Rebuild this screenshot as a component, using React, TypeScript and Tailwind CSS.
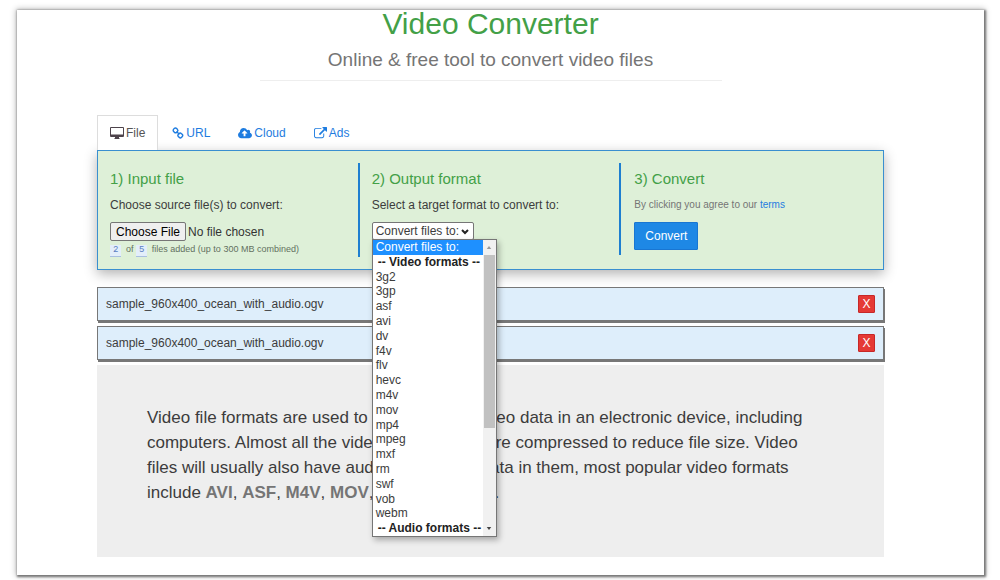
import type { ReactNode } from "react";

const tabs: { label: string; icon: ReactNode }[] = [
  { label: "URL", icon: <LinkIcon /> },
  { label: "Cloud", icon: <CloudIcon /> },
  { label: "Ads", icon: <ExternalIcon /> },
];

const formats = [
  "Convert files to:", "-- Video formats --", "3g2", "3gp", "asf", "avi", "dv", "f4v", "flv", "hevc",
  "m4v", "mov", "mp4", "mpeg", "mxf", "rm", "swf", "vob", "webm", "-- Audio formats --",
];

const files = [
  { id: 1, name: "sample_960x400_ocean_with_audio.ogv" },
  { id: 2, name: "sample_960x400_ocean_with_audio.ogv" },
];

export default function App() {
  return (
    <div className="bg-white pt-[10px] pr-4 pb-[5px] pl-[17px] font-['Liberation_Sans',Arial,sans-serif] text-[#3c3c3c]">
      <main className="bg-white pr-[100px] pb-[18px] pl-20 shadow-[1px_1px_2px_1px_#777,0_0_6px_1px_#bbb]">
        <header className="text-center">
          <h1 className="text-[30px] leading-7 text-[#43a047]">Video Converter</h1>
          <p className="mt-[6px] text-[19px] leading-8 text-[#757575]">Online &amp; free tool to convert video files</p>
          <hr className="mx-auto mt-1 w-[462px] max-w-full border-[#eee]" />
        </header>

        <nav className="mt-[34px] flex text-xs leading-5">
          <a href="#file" className="flex items-center gap-[2px] border border-b-0 border-[#ddd] bg-white px-3 py-[7px] text-[#555]">
            <DesktopIcon />
            File
          </a>
          {tabs.map((tab) => (
            <a key={tab.label} href={`#${tab.label.toLowerCase()}`} className="flex items-center gap-[2px] px-[14px] pt-2 pb-[7px] text-[#1e7ce0]">
              {tab.icon}
              {tab.label}
            </a>
          ))}
        </nav>

        <Steps />

        <ul className="mt-[17px] space-y-[5px]">
          {files.map((file) => (
            <li key={file.id} className="flex h-[34px] items-center justify-between border border-[#777] bg-[#deeefb] pr-2 pl-2 text-xs shadow-[1px_2px_0_#777]">
              {file.name}
              <button type="button" aria-label={`Remove ${file.name}`} className="h-[18px] w-[17px] rounded-[1px] border border-[#c62828] bg-[#e53935] text-xs leading-4 text-white">
                X
              </button>
            </li>
          ))}
        </ul>

        <section className="mt-[5px] bg-[#eee] pt-10 pr-[70px] pb-[52px] pl-[50px]">
          <p className="text-[17px] leading-[25px]">
            Video file formats are used to record digital video data in an electronic device, including computers. Almost all
            the video data formats are compressed to reduce file size. Video files will usually also have audio and picture
            data in them, most popular video formats include <Format name="AVI" />, <Format name="ASF" />, <Format name="M4V" />,{" "}
            <Format name="MOV" />, <Format name="HEVC" />, <Format name="MPEG4" />.
          </p>
        </section>
      </main>
    </div>
  );
}

function Steps() {
  return (
    <form className="grid h-[120px] grid-cols-3 border border-[#3a8fd0] bg-[#def0d8] pt-3 text-xs shadow-[0_4px_12px_#0000004d]">
      <div className="h-[94px] border-r-2 border-[#1e7fd0] pl-3">
        <StepTitle>1) Input file</StepTitle>
        <label htmlFor="source" className="mt-2 block leading-4">Choose source file(s) to convert:</label>
        <input
          id="source"
          type="file"
          className="mt-[9px] block h-[19px] w-full text-xs leading-[17px] text-[#333] file:mr-[2px] file:h-[19px] file:rounded-[2px] file:border file:border-solid file:border-[#767676] file:bg-[#efefef] file:px-[5px] file:text-xs file:leading-4 file:text-black"
        />
        <p className="text-[9px] leading-4 text-[#63705f]">
          <Count>2</Count> of <Count>5</Count> files added (up to 300 MB combined)
        </p>
      </div>
      <div className="h-[92px] border-r-2 border-[#1e7fd0] pl-3">
        <StepTitle>2) Output format</StepTitle>
        <label htmlFor="format" className="mt-2 block leading-4">Select a target format to convert to:</label>
        <div className="relative mt-[9px]">
          <select id="format" className="block h-[18px] w-[102px] appearance-none rounded-[2px] border border-[#767676] bg-white pl-[3px] text-xs leading-4">
            <option>Convert files to:</option>
          </select>
          <svg viewBox="0 0 8 6" className="pointer-events-none absolute top-[7px] left-[89px] h-[6px] w-2" fill="none" stroke="#222" strokeWidth="2">
            <path d="M1 1l3 3 3-3" />
          </svg>
          <FormatList />
        </div>
      </div>
      <div className="pl-[13px]">
        <StepTitle>3) Convert</StepTitle>
        <p className="mt-2 text-[10px] leading-4 text-[#757575]">
          By clicking you agree to our <a href="#terms" className="text-[#1e7ce0]">terms</a>
        </p>
        <button type="button" className="mt-[9px] h-7 rounded-[1px] border border-[#1976d2] bg-[#1e88e5] px-[10px] text-xs text-white">Convert</button>
      </div>
    </form>
  );
}

function StepTitle({ children }: { children: ReactNode }) {
  return <h2 className="pt-[6px] text-[15px] leading-5 text-[#43a047]">{children}</h2>;
}

function Count({ children }: { children: ReactNode }) {
  return <span className="mr-[2px] inline-block border-b border-[#a9bfe0] bg-[#e3eefa] px-[3px] font-['Liberation_Mono',monospace] text-[9px] leading-[11px] text-[#5a7fc0]">{children}</span>;
}

function FormatList() {
  return (
    <div className="absolute top-[17px] left-0 z-10 flex h-[298px] w-[125px] border border-[#767676] bg-white shadow-[2px_3px_6px_#0000004d]">
      <ul role="listbox" aria-label="Formats" className="grid flex-1 auto-rows-fr text-xs leading-[14px]">
        {formats.map((format, i) => (
          <li
            key={format}
            role="option"
            aria-selected={i === 0}
            className={i === 0 ? "bg-[#1e90ff] pl-[3px] text-white" : format.startsWith("--") ? "pl-[5px] font-bold whitespace-nowrap text-[#222]" : "pl-[3px]"}
          >
            {format}
          </li>
        ))}
      </ul>
      <div className="flex w-[13px] flex-col items-center bg-[#f1f1f1]">
        <svg viewBox="0 0 6 4" className="my-[6px] h-[3px] w-[6px]" fill="#999"><path d="M0 4l3-4 3 4z" /></svg>
        <div className="h-[173px] w-[11px] bg-[#c1c1c1]" />
        <svg viewBox="0 0 6 4" className="mt-auto mb-[6px] h-[3px] w-[6px]" fill="#444"><path d="M0 0l3 4 3-4z" /></svg>
      </div>
    </div>
  );
}

function Format({ name }: { name: string }) {
  return <b className="text-[#757575]">{name}</b>;
}

function DesktopIcon() {
  return (
    <svg viewBox="0 0 14 13" className="h-[13px] w-[14px]" fill="#4d434b">
      <path fillRule="evenodd" d="M1 0h12q1 0 1 1v8q0 1-1 1H9v1l1 1H4l1-1v-1H1q-1 0-1-1V1q0-1 1-1zM1 1v6.500h12V1z" />
    </svg>
  );
}

function LinkIcon() {
  return (
    <svg viewBox="0 0 12 12" className="h-3 w-3" fill="none" stroke="#1e7ce0" strokeWidth="1.4">
      <rect x="1.300" y="1.300" width="4.400" height="4.200" rx="1.700" transform="rotate(45 3.500 3.400)" />
      <rect x="6.100" y="6.400" width="4.400" height="4.200" rx="1.700" transform="rotate(45 8.300 8.500)" />
      <path d="M4.600 4.600l2.700 2.700" />
    </svg>
  );
}

function CloudIcon() {
  return (
    <svg viewBox="0 0 1920 1792" className="h-[13px] w-[14px]" fill="#1e7ce0">
      <path d="M1280 864q0-14-9-23l-352-352q-9-9-23-9t-23 9l-351 351q-10 12-10 24 0 14 9 23t23 9h224v352q0 13 9.500 22.500t22.500 9.500h192q13 0 22.500-9.500t9.500-22.500v-352h224q13 0 22.500-9.500t9.500-22.500zm640 288q0 159-112.500 271.500t-271.500 112.500h-1088q-185 0-316.500-131.500t-131.500-316.500q0-130 70-240t188-165q-2-30-2-43 0-212 150-362t362-150q156 0 285.500 87t188.500 231q71-62 166-62 106 0 181 75t75 181q0 76-41 138 130 31 213.500 135.500t83.500 238.500z" />
    </svg>
  );
}

function ExternalIcon() {
  return (
    <svg viewBox="0 0 1792 1792" className="h-[13px] w-[13px]" fill="#1e7ce0">
      <path d="M1408 928v320q0 119-84.500 203.500t-203.500 84.500h-832q-119 0-203.500-84.500t-84.500-203.500v-832q0-119 84.500-203.500t203.500-84.500h704q14 0 23 9t9 23v64q0 14-9 23t-23 9h-704q-66 0-113 47t-47 113v832q0 66 47 113t113 47h832q66 0 113-47t47-113v-320q0-14 9-23t23-9h64q14 0 23 9t9 23zm384-864v512q0 26-19 45t-45 19-45-19l-176-176-652 652q-10 10-23 10t-23-10l-114-114q-10-10-10-23t10-23l652-652-176-176q-19-19-19-45t19-45 45-19h512q26 0 45 19t19 45z" />
    </svg>
  );
}
